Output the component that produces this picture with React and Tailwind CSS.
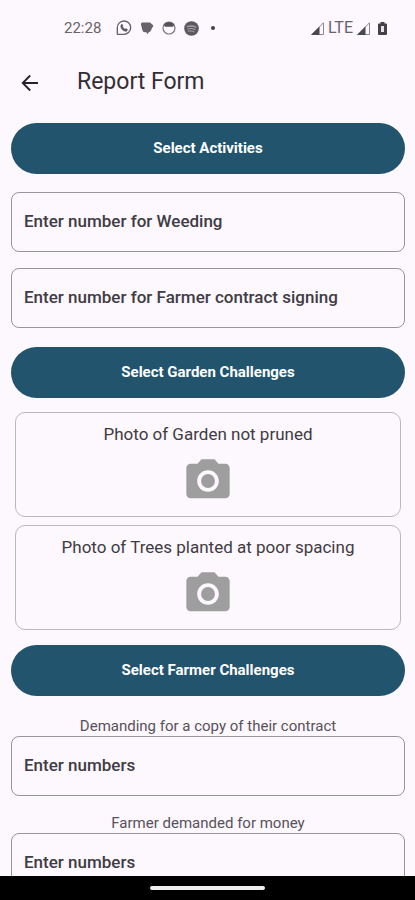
import React from "react";

function WhatsAppIcon() {
  return (
    <svg viewBox="0 0 24 24" className="size-4" fill="none" stroke="#67636a" strokeWidth="2" aria-hidden="true">
      <path d="M2 22V12A10 10 0 1 1 12 21.500H2" />
      <path
        d="M8.200 6.800c.6-.5 1.100-.3 1.400.3l.7 1.600c.2.500-.7 1.200-.6 1.600.6 1.500 2 2.800 3.600 3.500.5.200 1.100-1 1.600-.8l1.900 1c.7.500-.1 2-1 2.500-1.600.9-4.300-.2-6.100-1.900C7.700 12.700 6.300 9.400 8.200 6.800z"
        fill="#57535a"
        stroke="#57535a"
        strokeWidth="1"
      />
    </svg>
  );
}

function ChatIcon() {
  return (
    <svg viewBox="0 0 14 14" className="size-3.5" fill="#67636a" aria-hidden="true">
      <path d="M2.500 1.500h7a2 2 0 0 1 2 1.500l1.200.8a1.200 1.200 0 0 1 .3 1.700l-1.500 2.500c-.3 1.700-1.200 2.700-2.500 3L7.500 13 6.300 11.200H5A2.800 2.800 0 0 1 2.300 9L1 3.500a1.600 1.600 0 0 1 1.500-2z" />
    </svg>
  );
}

function FaceIcon() {
  return (
    <svg viewBox="0 0 14 14" className="size-3.5" aria-hidden="true">
      <circle cx="7" cy="7" r="6" fill="none" stroke="#7b777e" strokeWidth="1.200" />
      <path d="M1.800 4A6 6 0 0 1 12.200 4L11 5.800H3z" fill="#57535a" />
    </svg>
  );
}

function SpotifyIcon() {
  return (
    <svg viewBox="0 0 15 15" className="size-[15px]" aria-hidden="true">
      <circle cx="7.500" cy="7.500" r="7.300" fill="#5c585f" />
      <g fill="none" stroke="#a5a1a8" strokeLinecap="round">
        <path d="M3.300 5.600c2.900-.9 6-.7 8.500.7" strokeWidth="1.300" />
        <path d="M3.800 8c2.400-.7 5-.5 7.200.6" strokeWidth="1.100" />
        <path d="M4.200 10.200c2-.5 4-.3 5.800.6" strokeWidth="1" />
      </g>
    </svg>
  );
}

function SignalIcon() {
  return (
    <svg viewBox="0 0 13 13" className="size-[13px]" aria-hidden="true">
      <path d="M12.500.8V12.500H.8z" fill="none" stroke="#8b878e" strokeWidth="1" />
      <path d="M8.500 4.500V13H0z" fill="#4b474e" />
    </svg>
  );
}

function BatteryIcon() {
  return (
    <svg viewBox="0 0 9 13" className="h-[13px] w-[9px]" aria-hidden="true">
      <path d="M2.500 0h4v1.500H8a1 1 0 0 1 1 1V12a1 1 0 0 1-1 1H1a1 1 0 0 1-1-1V2.500a1 1 0 0 1 1-1h1.500z" fill="#454148" />
      <path d="M3 4h3v6H3z" fill="#e6e0e8" />
    </svg>
  );
}

function CameraIcon() {
  return (
    <svg viewBox="0 0 24 24" className="size-[52px]" fill="#9e9e9e" aria-hidden="true">
      <circle cx="12" cy="12" r="3.200" />
      <path d="M9 2L7.170 4H4c-1.100 0-2 .9-2 2v12c0 1.100.9 2 2 2h16c1.100 0 2-.9 2-2V6c0-1.100-.9-2-2-2h-3.170L15 2H9zm3 15c-2.760 0-5-2.240-5-5s2.240-5 5-5 5 2.240 5 5-2.240 5-5 5z" />
    </svg>
  );
}

function StatusBar() {
  return (
    <div className="flex h-14 shrink-0 items-center justify-between pr-7 pl-16 text-[#67636a]">
      <div className="flex items-center gap-2">
        <span className="w-11 text-[15px]">22:28</span>
        <WhatsAppIcon />
        <ChatIcon />
        <FaceIcon />
        <SpotifyIcon />
        <span className="ml-1 size-1 rounded-full bg-[#454148]" />
      </div>
      <div className="flex items-center gap-1">
        <SignalIcon />
        <span className="text-base">LTE</span>
        <SignalIcon />
        <span className="ml-1">
          <BatteryIcon />
        </span>
      </div>
    </div>
  );
}

function SelectButton({ children }) {
  return (
    <button type="button" className="h-[51px] w-full shrink-0 rounded-full bg-[#22546d] text-[15px] font-bold text-white">
      {children}
    </button>
  );
}

function NumberField({ id, label, placeholder }) {
  return (
    <div className="flex flex-col">
      {label && (
        <label htmlFor={id} className="text-center text-[15px] leading-5 text-[#56525a]">
          {label}
        </label>
      )}
      <input
        id={id}
        inputMode="numeric"
        aria-label={label ? undefined : placeholder}
        placeholder={placeholder}
        className="h-[60px] w-full rounded-lg border border-[#99959c] bg-transparent px-3 pb-0.5 text-[17px] font-medium text-[#403c44] outline-none placeholder:text-[#403c44]"
      />
    </div>
  );
}

function PhotoCard({ title }) {
  return (
    <button type="button" className="flex h-[105px] w-full flex-col items-center rounded-[10px] border border-[#bcb7be] pt-2">
      <span className="text-[17px] leading-[26px] text-[#3f3b42]">{title}</span>
      <span className="mt-2">
        <CameraIcon />
      </span>
    </button>
  );
}

export default function App() {
  return (
    <div className="flex h-screen flex-col bg-[#fdf7fe] font-[Roboto,sans-serif]">
      <StatusBar />
      <header className="flex h-[53px] shrink-0 items-center gap-9 px-[19px]">
        <button type="button" aria-label="Back" className="flex size-[22px] items-center justify-center">
          <svg viewBox="0 0 18 18" className="size-[18px]" fill="none" stroke="#252128" strokeWidth="1.800" aria-hidden="true">
            <path d="M17 9H2M9.200 1.500L1.700 9l7.500 7.500" />
          </svg>
        </button>
        <h1 className="text-[23px] text-[#322e35]">Report Form</h1>
      </header>
      <main className="min-h-0 flex-1 overflow-y-auto pt-[14px] pr-[10px] pl-[11px] [scrollbar-width:none]">
        <SelectButton>Select Activities</SelectButton>
        <div className="flex flex-col gap-4 pt-[18px] pb-[19px]">
          <NumberField id="weeding" placeholder="Enter number for Weeding" />
          <NumberField id="contract-signing" placeholder="Enter number for Farmer contract signing" />
        </div>
        <SelectButton>Select Garden Challenges</SelectButton>
        <div className="flex flex-col gap-2 px-1 pt-[14px] pb-[15px]">
          <PhotoCard title="Photo of Garden not pruned" />
          <PhotoCard title="Photo of Trees planted at poor spacing" />
        </div>
        <SelectButton>Select Farmer Challenges</SelectButton>
        <div className="flex flex-col gap-[17px] pt-5">
          <NumberField id="contract-copy" label="Demanding for a copy of their contract" placeholder="Enter numbers" />
          <NumberField id="money" label="Farmer demanded for money" placeholder="Enter numbers" />
        </div>
      </main>
      <footer className="flex h-6 shrink-0 items-center justify-center bg-black">
        <span className="h-1 w-[115px] rounded-full bg-[#eeeeee]" />
      </footer>
    </div>
  );
}
